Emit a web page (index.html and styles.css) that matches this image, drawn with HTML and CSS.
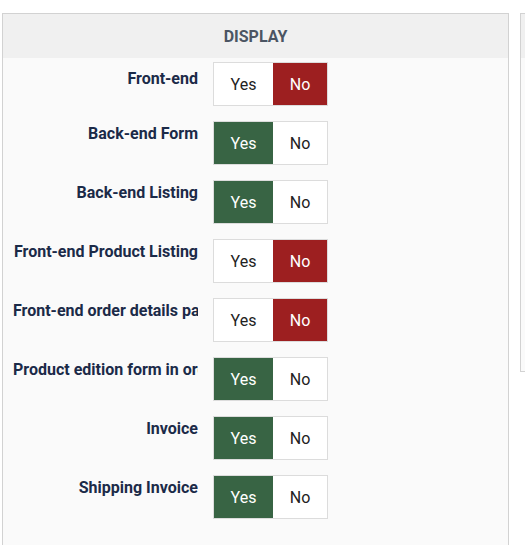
FILE: index.html
```html
<!DOCTYPE html>
<html>
<head>
<meta charset="utf-8">
<link rel="stylesheet" href="styles.css">
</head>
<body>
<div class="page">
  <div class="panel">
    <div class="panel-head">DISPLAY</div>
    <div class="panel-body">
      <div class="row first"><div class="label">Front-end</div><div class="toggle"><span class="opt">Yes</span><span class="opt no-on">No</span></div></div>
      <div class="row"><div class="label">Back-end Form</div><div class="toggle"><span class="opt yes-on">Yes</span><span class="opt">No</span></div></div>
      <div class="row"><div class="label">Back-end Listing</div><div class="toggle"><span class="opt yes-on">Yes</span><span class="opt">No</span></div></div>
      <div class="row"><div class="label">Front-end Product Listing</div><div class="toggle"><span class="opt">Yes</span><span class="opt no-on">No</span></div></div>
      <div class="row"><div class="label">Front-end order details page</div><div class="toggle"><span class="opt">Yes</span><span class="opt no-on">No</span></div></div>
      <div class="row"><div class="label">Product edition form in order</div><div class="toggle"><span class="opt yes-on">Yes</span><span class="opt">No</span></div></div>
      <div class="row"><div class="label">Invoice</div><div class="toggle"><span class="opt yes-on">Yes</span><span class="opt">No</span></div></div>
      <div class="row"><div class="label">Shipping Invoice</div><div class="toggle"><span class="opt yes-on">Yes</span><span class="opt">No</span></div></div>
    </div>
  </div>
  <div class="panel2"><div class="panel2-head"></div></div>
</div>
</body>
</html>
```
FILE: styles.css
```css
html, body { margin: 0; padding: 0; background: #fff; overflow: hidden; }
body { font-family: Roboto, "Liberation Sans", sans-serif; width: 525px; height: 545px; }
.page { display: flex; align-items: flex-start; padding-top: 13px; padding-left: 2px; gap: 11px; }
.panel { width: 505px; border: 1px solid #d2d2d2; background: #fafafa; height: 560px; flex-shrink: 0; }
.panel-head { height: 44px; background: #f0f0f0; display: flex; align-items: center; justify-content: center; font-weight: bold; font-size: 16px; color: #4b5563; }
.panel-body { padding: 4px 0 0 10px; display: flex; flex-direction: column; gap: 15px; }
.row { display: flex; gap: 15px; }
.label { width: 185px; text-align: right; white-space: nowrap; overflow: hidden; font-weight: bold; font-size: 16px; color: #1b2a48; padding-top: 3px; line-height: 20px; }
.first .label { padding-top: 7px; }
.toggle { display: flex; border: 1px solid #dcdcdc; background: #fff; height: 42px; }
.opt { display: flex; align-items: center; justify-content: center; font-size: 16px; color: #222; }
.opt:first-child { width: 59px; }
.opt:last-child { width: 54px; }
.yes-on { background: #386444; color: #fff; }
.no-on { background: #9d1f20; color: #fff; }
.panel2 { width: 30px; height: 357px; border: 1px solid #d2d2d2; background: #fafafa; flex-shrink: 0; }
.panel2-head { height: 44px; background: #f0f0f0; }
```
